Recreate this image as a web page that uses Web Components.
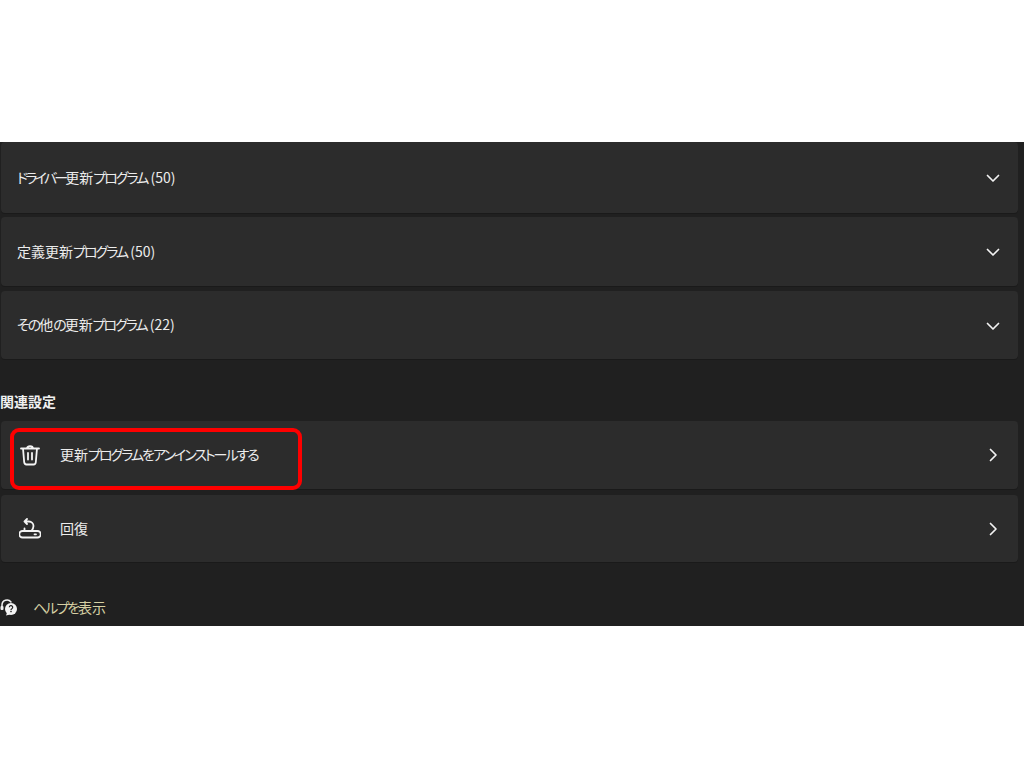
<!DOCTYPE html>
<html lang="ja">
<head>
<meta charset="utf-8">
<title>Windows Update</title>
<style>
  html, body { margin: 0; background: #fff; }
  body {
    width: 1024px;
    height: 768px;
    overflow: hidden;
    padding-top: 142px;
    box-sizing: border-box;
    font-family: "Noto Sans CJK JP", "Noto Sans", sans-serif;
  }
  /* kana runs are narrower than the kanji in the original UI font */
  .k { letter-spacing: -2px; }
  .k2 { letter-spacing: -2.800px; }
</style>
</head>
<body>
<settings-panel>
  <settings-card style="--card-h:71px; --card-mb:4px"><span class="k2">ドライバー</span>更新<span class="k">プログラム</span> (50)</settings-card>
  <settings-card style="--card-h:69px; --card-mb:5px">定義更新<span class="k">プログラム</span> (50)</settings-card>
  <settings-card style="--card-h:68px"><span class="k">その</span>他<span class="k">の</span>更新<span class="k">プログラム</span> (22)</settings-card>
  <section-title>関連設定</section-title>
  <settings-card icon="trash" arrow="right" highlight style="--card-h:68px; --card-mb:6px">更新<span class="k">プログラムをアンインストールする</span></settings-card>
  <settings-card icon="recovery" arrow="right" style="--card-h:67px">回復</settings-card>
  <help-link><span class="k">ヘルプを</span>表示</help-link>
</settings-panel>

<script>
const ICONS = {
  trash: `<svg width="20" height="22" viewBox="0 0 20 22" fill="none" stroke="#f4f4f4" stroke-width="1.800" stroke-linecap="round" stroke-linejoin="round">
    <path d="M1 4.500h18M7 4.500c0-3.300 6-3.300 6 0M3 4.500l1.200 13.700c.1 1.300 1 2.300 2.200 2.300h7.200c1.200 0 2.100-1 2.200-2.300L17 4.500M8 9v6.500M12 9v6.500"/>
  </svg>`,
  recovery: `<svg width="22" height="22" viewBox="0 0 22 22" fill="none" stroke="#f4f4f4" stroke-width="1.800" stroke-linecap="round" stroke-linejoin="round">
    <path d="M3.500 13h15a2.500 2.500 0 0 1 0 6.500h-15a2.500 2.500 0 0 1 0-6.500z"/>
    <path d="M5.500 13V10.500M8 1L5.500 3.500 8 6M5.500 3.500h4.500a4.500 4.500 0 0 1 4.500 4.500c0 2-1 3.500-2 5"/>
    <path d="M15.500 16.300h1.500"/>
  </svg>`,
  down: `<svg width="14" height="9" viewBox="0 0 14 9" fill="none" stroke="#f2f2f2" stroke-width="1.700" stroke-linecap="round" stroke-linejoin="round"><path d="M1.500 1.500L7 7l5.500-5.500"/></svg>`,
  right: `<svg width="9" height="14" viewBox="0 0 9 14" fill="none" stroke="#f2f2f2" stroke-width="1.700" stroke-linecap="round" stroke-linejoin="round"><path d="M1.500 1.500L7 7l-5.500 5.500"/></svg>`
};

class SettingsPanel extends HTMLElement {
  constructor() {
    super();
    this.attachShadow({ mode: 'open' }).innerHTML = `
      <style>
        :host {
          display: block;
          height: 484px;
          overflow: hidden;
          background: #202020;
          box-sizing: border-box;
          padding: 0 6px 0 1px;
        }
      </style>
      <slot></slot>
    `;
  }
}

class SettingsCard extends HTMLElement {
  constructor() {
    super();
    this.attachShadow({ mode: 'open' });
  }

  connectedCallback() {
    const icon = this.getAttribute('icon');
    const arrow = this.getAttribute('arrow') || 'down';
    this.shadowRoot.innerHTML = `
      <style>
        :host {
          display: block;
          position: relative;
          height: var(--card-h, 68px);
          margin-bottom: var(--card-mb, 0);
        }
        .card {
          height: 100%;
          box-sizing: border-box;
          display: flex;
          align-items: center;
          padding: 0 17px 0 16px;
          background: #2c2c2c;
          border-radius: 4px;
          box-shadow: 0 1px 0 #1a1a1a;
          color: #ececec;
          font-size: 14px;
          font-feature-settings: "palt";
        }
        .icon {
          width: 28px;
          margin-right: 15px;
          display: flex;
          justify-content: center;
          margin-left: -1px;
          padding-right: 1px;
        }
        .label { flex: 1; position: relative; top: -1px; }
        .arrow { display: flex; width: 16px; justify-content: center; }
        .arrow.down { position: relative; top: 1px; }
        .mark {
          position: absolute;
          left: 9px;
          top: 7px;
          width: 292px;
          height: 62px;
          box-sizing: border-box;
          border: 4px solid #fe0000;
          border-radius: 9px;
        }
      </style>
      <div class="card">
        ${icon ? `<span class="icon">${ICONS[icon]}</span>` : ''}
        <span class="label"><slot></slot></span>
        <span class="arrow ${arrow}">${ICONS[arrow]}</span>
      </div>
      ${this.hasAttribute('highlight') ? '<div class="mark"></div>' : ''}
    `;
  }
}

class SectionTitle extends HTMLElement {
  constructor() {
    super();
    this.attachShadow({ mode: 'open' }).innerHTML = `
      <style>
        :host {
          display: block;
          height: 62px;
          box-sizing: border-box;
          padding-top: 32px;
          margin-left: -1px;
          color: #f0f0f0;
          font-size: 14px;
          font-weight: 700;
          line-height: 20px;
        }
      </style>
      <slot></slot>
    `;
  }
}

class HelpLink extends HTMLElement {
  constructor() {
    super();
    this.attachShadow({ mode: 'open' }).innerHTML = `
      <style>
        :host {
          display: flex;
          align-items: center;
          gap: 15px;
          margin: 35px 0 0 -1px;
          height: 20px;
          color: #d6d0a4;
          font-size: 14px;
          font-feature-settings: "palt";
        }
        svg { flex: none; }
      </style>
      <svg width="18" height="18" viewBox="0 0 18 18">
        <path d="M2 10V7a5 5 0 0 1 9-3" fill="none" stroke="#f0f0f0" stroke-width="1.500" stroke-linecap="round"/>
        <rect x="0.500" y="8" width="3" height="4" rx="1" fill="#f0f0f0"/>
        <circle cx="11" cy="11" r="6" fill="#f4f4f4"/>
        <path d="M7 15l-1 2.500 4-1z" fill="#f4f4f4"/>
        <path d="M9.300 9.300a1.700 1.700 0 1 1 2.500 1.500c-.6.3-.8.6-.8 1.200" fill="none" stroke="#202020" stroke-width="1.200"/>
        <rect x="10.300" y="12.800" width="1.400" height="1.400" fill="#202020"/>
      </svg>
      <span><slot></slot></span>
    `;
  }
}

customElements.define('settings-panel', SettingsPanel);
customElements.define('settings-card', SettingsCard);
customElements.define('section-title', SectionTitle);
customElements.define('help-link', HelpLink);
</script>
</body>
</html>
